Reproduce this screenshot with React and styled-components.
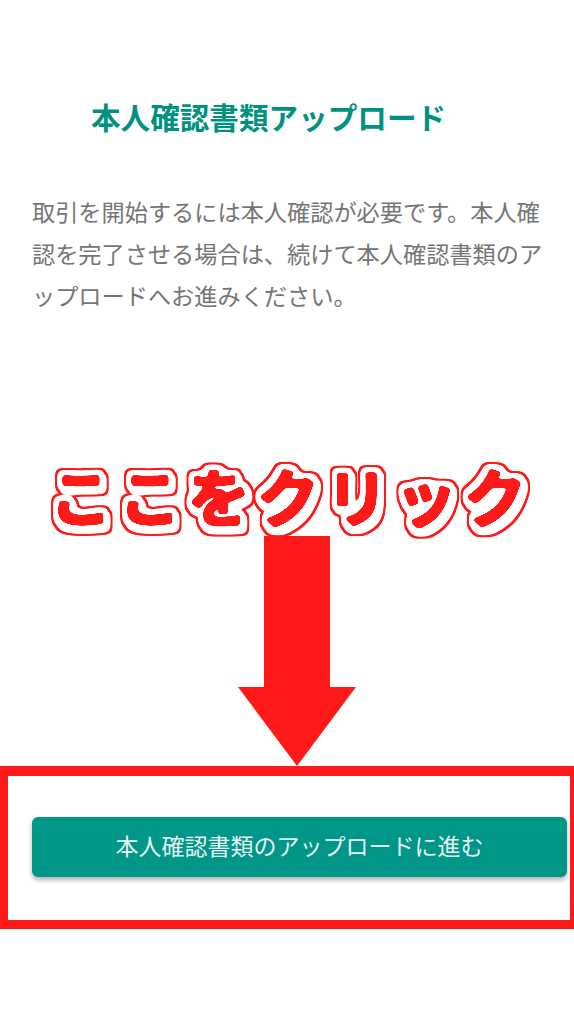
import styled, { createGlobalStyle } from 'styled-components';

const GlobalStyle = createGlobalStyle`
  html, body {
    margin: 0;
    padding: 0;
    background: #ffffff;
  }
  body {
    font-family: "Noto Sans CJK JP", "Noto Sans", sans-serif;
  }
`;

const Page = styled.div`
  position: relative;
  width: 574px;
  height: 1024px;
  overflow: hidden;
  display: flex;
  flex-direction: column;
  background: #ffffff;
`;

const Title = styled.h1`
  margin: 95px 0 0 91px;
  font-size: 29.6px;
  line-height: 44px;
  font-weight: 700;
  color: #00917f;
  white-space: nowrap;
`;

const Description = styled.p`
  margin: 51px 0 0 32px;
  width: 516px;
  font-size: 23.2px;
  line-height: 42px;
  font-weight: 400;
  color: #757575;
`;

const SubmitButton = styled.button`
  margin: auto 7px 147px 32px;
  height: 60px;
  padding: 0 0 5px;
  border: none;
  border-radius: 6px;
  background: #009688;
  color: #e6f4f2;
  font-family: inherit;
  font-size: 23px;
  font-weight: 400;
  box-shadow: 0 3px 5px rgba(0, 0, 0, 0.3);
`;

const Callout = styled.div`
  position: absolute;
  left: 50px;
  top: 450px;
  font-size: 62px;
  line-height: 90px;
  font-weight: 700;
  letter-spacing: 7px;
  white-space: nowrap;
  color: #ff1a1a;
  filter: url(#callout-outline);
`;

const FilterDefs = styled.svg`
  position: absolute;
  width: 0;
  height: 0;
`;

const Arrow = styled.svg`
  position: absolute;
  left: 238px;
  top: 536px;
  width: 118px;
  height: 230px;
`;

const HighlightBox = styled.div`
  position: absolute;
  left: 0;
  right: 0;
  top: 766px;
  height: 163px;
  box-sizing: border-box;
  border-style: solid;
  border-color: #ff1a1a;
  border-width: 10px 4px 9px 8px;
`;

// dilate, then blur and threshold so the outline corners come out round
const Outline = ({ radius, blur, result }) => (
  <>
    <feMorphology in="SourceAlpha" operator="dilate" radius={radius} />
    <feGaussianBlur stdDeviation={blur} />
    <feComponentTransfer result={result}>
      <feFuncA type="linear" slope="12" intercept="-5" />
    </feComponentTransfer>
  </>
);

const App = () => {
  return (
    <Page>
      <GlobalStyle />
      <FilterDefs aria-hidden="true">
        <defs>
          <filter id="callout-outline" x="-5%" y="-15%" width="110%" height="130%" colorInterpolationFilters="sRGB">
            <Outline radius={0.5} blur={1.6} result="core" />
            <Outline radius={6} blur={3} result="wide" />
            <feOffset in="wide" dx="2" dy="3" result="wideShift" />
            <feMerge result="whiteShape">
              <feMergeNode in="wide" />
              <feMergeNode in="wideShift" />
            </feMerge>
            <feMorphology in="whiteShape" operator="dilate" radius="2" />
            <feGaussianBlur stdDeviation="0.6" result="redShape" />
            <feFlood floodColor="#ff1a1a" />
            <feComposite in2="redShape" operator="in" result="outerRed" />
            <feFlood floodColor="#ffffff" />
            <feComposite in2="whiteShape" operator="in" result="white" />
            <feFlood floodColor="#ff1a1a" />
            <feComposite in2="core" operator="in" result="coreRed" />
            <feMerge>
              <feMergeNode in="outerRed" />
              <feMergeNode in="white" />
              <feMergeNode in="coreRed" />
            </feMerge>
          </filter>
        </defs>
      </FilterDefs>

      <Title>本人確認書類アップロード</Title>
      <Description>
        取引を開始するには本人確認が必要です。本人確認を完了させる場合は、続けて本人確認書類のアップロードへお進みください。
      </Description>
      <SubmitButton>本人確認書類のアップロードに進む</SubmitButton>

      <Callout>ここをクリック</Callout>
      <Arrow viewBox="0 0 118 230">
        <path d="M26 0H92V151H118L59 230L0 151H26Z" fill="#ff1a1a" />
      </Arrow>
      <HighlightBox />
    </Page>
  );
};

export default App;
